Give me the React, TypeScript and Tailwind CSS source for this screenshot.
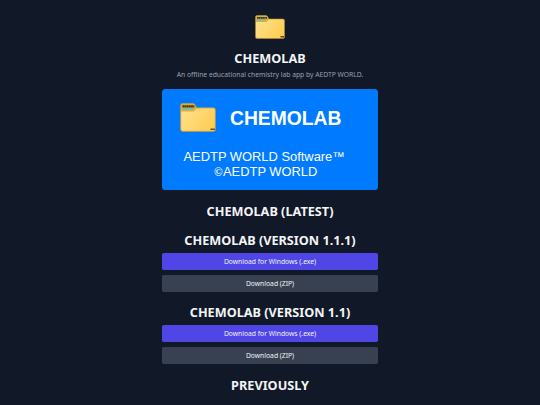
import React from 'react';

const releases = [
  { title: 'CHEMOLAB (VERSION 1.1.1)', version: '1.1.1' },
  { title: 'CHEMOLAB (VERSION 1.1)', version: '1.1' },
];

const FolderIcon: React.FC<{ className?: string }> = ({ className }) => (
  <svg className={className} viewBox="0 0 60 48" fill="none" preserveAspectRatio="none">
    <defs>
      <linearGradient id="folder" x1="0" y1="0" x2="60" y2="48" gradientUnits="userSpaceOnUse">
        <stop stopColor="#ffe594" />
        <stop offset="1" stopColor="#fdc94a" />
      </linearGradient>
    </defs>
    <path d="M1 4a3 3 0 013-3h18c4 0 4 7 7 7h27a3 3 0 013 3v33a3 3 0 01-3 3H4a3 3 0 01-3-3z" fill="#e2ae3b" stroke="#c9a24a" />
    <path d="M2 14h20c3 0 4-5 7-5h26a3 3 0 013 3v31a3 3 0 01-3 3H5a3 3 0 01-3-3z" fill="url(#folder)" />
    <path d="M4 9.5h18" stroke="#5fbfc4" strokeWidth="3" />
    <path d="M4 5.5h20" stroke="#4b3714" strokeWidth="3.5" strokeDasharray="3.2 .4" />
    <path d="M51 43.5h7" stroke="#4b3714" strokeWidth="2.6" strokeDasharray="2.2 .4" />
  </svg>
);

const Banner: React.FC = () => (
  <div className="h-[100.9px] w-full rounded-[3.6px] bg-[#007bff] text-left font-['Liberation_Sans',sans-serif] text-white">
    <div className="flex items-start pt-[13.8px] pl-[18px]">
      <FolderIcon className="h-[29px] w-9" />
      <span className="ml-[14px] pt-[2.4px] text-[19.3px] leading-[28px] font-bold">CHEMOLAB</span>
    </div>
    <div className="pt-[15.6px] pl-[21.5px] text-[12.9px] leading-[15px]">
      <p>AEDTP WORLD Software™</p>
      <p className="pl-[30.5px]">
        <span className="inline-block w-[9px] font-['Liberation_Serif',serif] text-[11.5px] leading-none font-bold">©</span>AEDTP WORLD
      </p>
    </div>
  </div>
);

const App: React.FC = () => {
  return (
    <div className="flex h-screen justify-center overflow-hidden bg-[#111827] font-['Noto_Sans',sans-serif] text-gray-100">
      <main className="w-[216px] pt-[15px] text-center">
        <FolderIcon className="mx-auto h-6 w-[30px]" />
        <h1 className="mt-[11px] text-[12.7px] leading-4 font-bold">CHEMOLAB</h1>
        <p className="mt-[3.7px] mb-[9.6px] text-[6.75px] leading-[10px] whitespace-nowrap text-gray-400">
          An offline educational chemistry lab app by AEDTP WORLD.
        </p>
        <Banner />

        <h2 className="mt-[12.8px] mb-[12.7px] text-[12.7px] leading-4 font-bold">CHEMOLAB (LATEST)</h2>

        {releases.map((release) => (
          <section key={release.version} className="mb-[12.5px]">
            <h2 className="text-[12.7px] leading-4 font-bold">{release.title}</h2>
            <button className="mt-[5px] block h-[17px] w-full rounded-[1.8px] bg-[#4f46e5] pt-[1.6px] text-[6.75px] leading-none">
              Download for Windows (.exe)
            </button>
            <button className="mt-[5px] block h-[17px] w-full rounded-[1.8px] bg-[#374151] pt-[1.6px] text-[6.75px] leading-none">
              Download (ZIP)
            </button>
          </section>
        ))}

        <h2 className="text-[12.7px] leading-4 font-bold">PREVIOUSLY</h2>
      </main>
    </div>
  );
};

export default App;
